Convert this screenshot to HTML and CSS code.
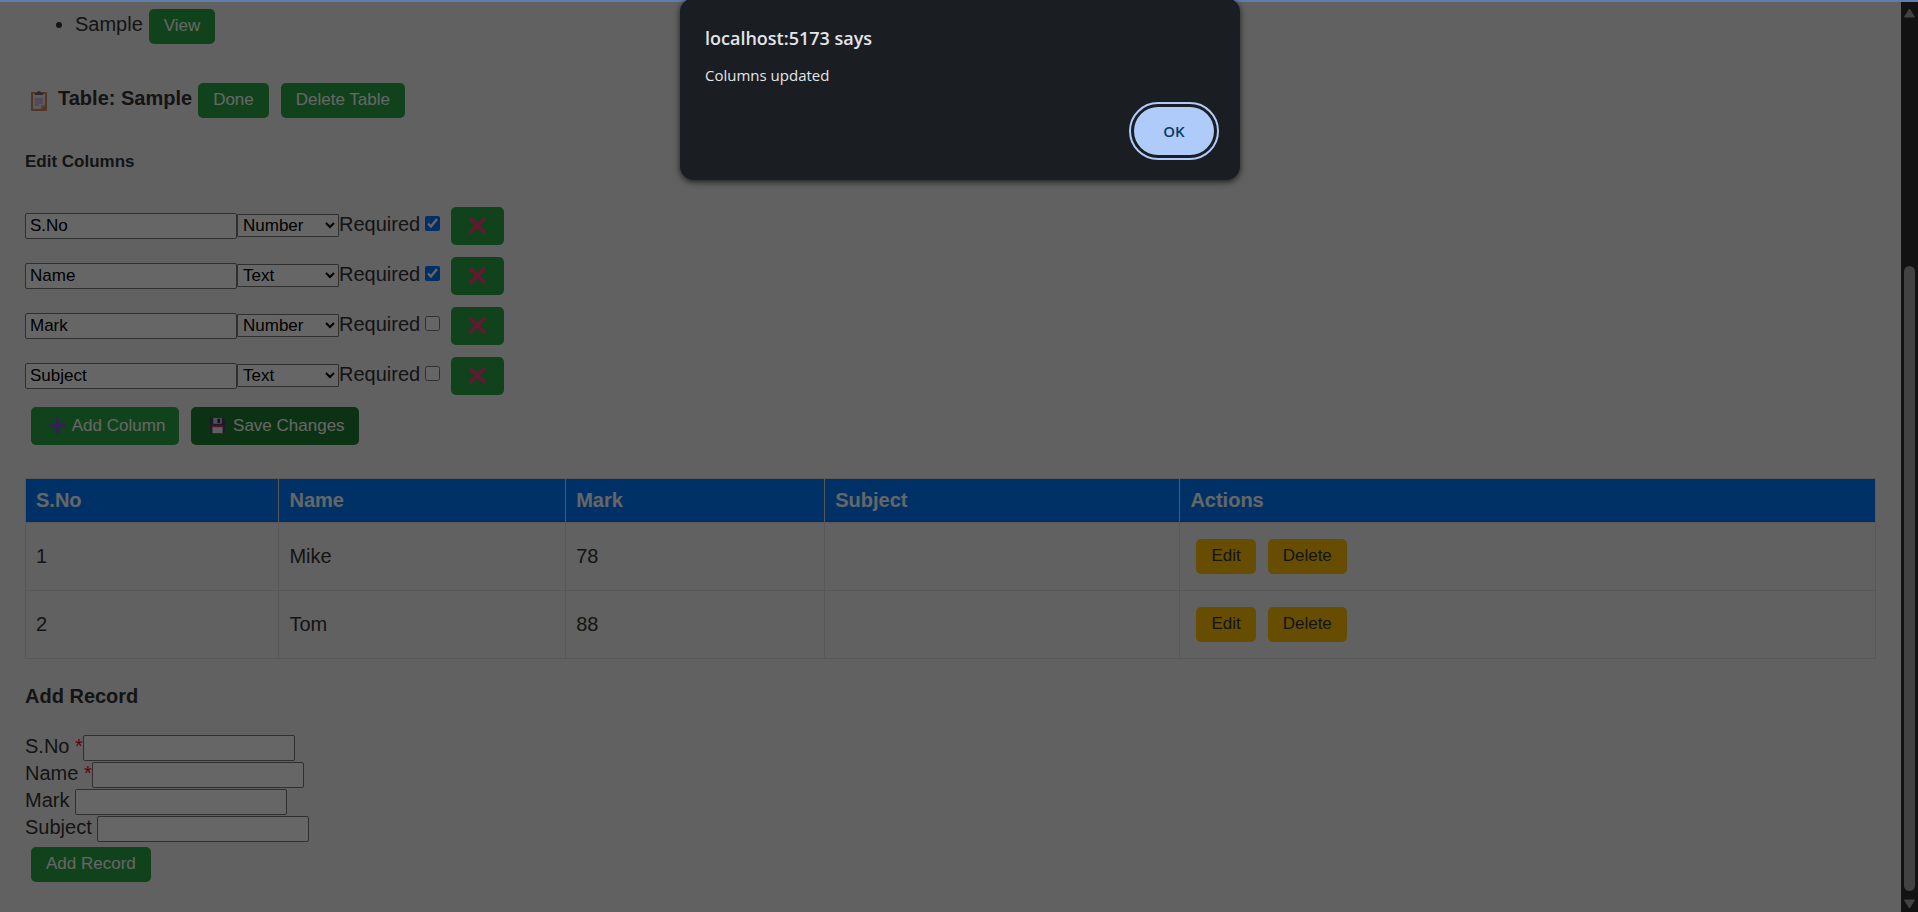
FILE: index.html
```
<!DOCTYPE html>
<html lang="en">
<head>
<meta charset="utf-8">
<title>Table Builder</title>
<link rel="stylesheet" href="styles.css">
</head>
<body>
<svg class="defs" aria-hidden="true">
  <symbol id="i-clip" viewBox="0 0 20 20">
    <rect x="2" y="1" width="16" height="19" rx="1" fill="#d08552"/>
    <path d="M4 3h12v11l-4 4H4z" fill="#e9e4f2"/>
    <path d="M16 14l-4 4v-4z" fill="#b9aed0"/>
    <path d="M6 4V2h2a2 2 0 0 1 4 0h2v2z" fill="#6d6877"/>
    <path d="M6 8h8M6 10h8M6 12h8M6 14h4" stroke="#a49bbb" stroke-width="1"/>
  </symbol>
  <symbol id="i-cross" viewBox="0 0 20 20">
    <path d="M2 2l16 16M18 2L2 18" stroke="#f0437a" stroke-width="4" stroke-linecap="round"/>
  </symbol>
  <symbol id="i-plus" viewBox="0 0 20 20">
    <path d="M10 2v16M2 10h16" stroke="#7a55c7" stroke-width="4" stroke-linecap="round"/>
  </symbol>
  <symbol id="i-disk" viewBox="0 0 20 20">
    <path d="M1 1h16l2 2v16H1z" fill="#4b4468"/>
    <rect x="5" y="1" width="10" height="7" fill="#c9c3d6"/>
    <rect x="10" y="2" width="3" height="5" fill="#302b45"/>
    <rect x="4" y="11" width="12" height="8" fill="#efeaf6"/>
    <rect x="4" y="10" width="12" height="2" fill="#f0305a"/>
  </symbol>
</svg>
<div class="topline"></div>
<div class="page">
  <main class="content">
    <ul class="tables"><li><div class="line">Sample<button class="btn">View</button></div></li></ul>

    <h3 class="line table-title"><svg class="icon icon-lg"><use href="#i-clip"/></svg>Table: Sample<button class="btn">Done</button><button class="btn">Delete Table</button></h3>

    <h5 class="subtitle">Edit Columns</h5>
    <div class="line column-row">
      <input class="field" type="text" value="S.No" aria-label="Column name">
      <select class="kind" aria-label="Column type"><option selected>Number</option><option>Text</option></select>
      <label class="req">Required<input type="checkbox" checked></label>
      <button class="btn tall" aria-label="Remove column"><svg class="icon"><use href="#i-cross"/></svg></button>
    </div>
    <div class="line column-row">
      <input class="field" type="text" value="Name" aria-label="Column name">
      <select class="kind" aria-label="Column type"><option>Number</option><option selected>Text</option></select>
      <label class="req">Required<input type="checkbox" checked></label>
      <button class="btn tall" aria-label="Remove column"><svg class="icon"><use href="#i-cross"/></svg></button>
    </div>
    <div class="line column-row">
      <input class="field" type="text" value="Mark" aria-label="Column name">
      <select class="kind" aria-label="Column type"><option selected>Number</option><option>Text</option></select>
      <label class="req">Required<input type="checkbox"></label>
      <button class="btn tall" aria-label="Remove column"><svg class="icon"><use href="#i-cross"/></svg></button>
    </div>
    <div class="line column-row">
      <input class="field" type="text" value="Subject" aria-label="Column name">
      <select class="kind" aria-label="Column type"><option>Number</option><option selected>Text</option></select>
      <label class="req">Required<input type="checkbox"></label>
      <button class="btn tall" aria-label="Remove column"><svg class="icon"><use href="#i-cross"/></svg></button>
    </div>
    <div class="line">
      <button class="btn tall labelled"><svg class="icon"><use href="#i-plus"/></svg> Add Column</button>
      <button class="btn tall labelled active"><svg class="icon"><use href="#i-disk"/></svg> Save Changes</button>
    </div>

    <table class="records">
      <colgroup><col class="c-no"><col class="c-name"><col class="c-mark"><col class="c-subject"><col></colgroup>
      <thead><tr><th>S.No</th><th>Name</th><th>Mark</th><th>Subject</th><th>Actions</th></tr></thead>
      <tbody>
        <tr><td>1</td><td>Mike</td><td>78</td><td></td><td><div class="line"><button class="btn warn">Edit</button><button class="btn warn">Delete</button></div></td></tr>
        <tr><td>2</td><td>Tom</td><td>88</td><td></td><td><div class="line"><button class="btn warn">Edit</button><button class="btn warn">Delete</button></div></td></tr>
      </tbody>
    </table>

    <h4 class="form-title">Add Record</h4>
    <form class="record-form">
      <div class="line"><label for="f1">S.No <span class="star">*</span></label><input class="field" id="f1" type="text"></div>
      <div class="line"><label for="f2">Name <span class="star">*</span></label><input class="field" id="f2" type="text"></div>
      <div class="line"><label for="f3">Mark&nbsp;</label><input class="field" id="f3" type="text"></div>
      <div class="line"><label for="f4">Subject&nbsp;</label><input class="field" id="f4" type="text"></div>
      <button class="btn submit" type="button">Add Record</button>
    </form>
  </main>
  <div class="scrollbar" aria-hidden="true">
    <svg class="arrow" viewBox="0 0 12 10"><path d="M6 1l5 8H1z"/></svg>
    <div class="track"><div class="thumb"></div></div>
    <svg class="arrow" viewBox="0 0 12 10"><path d="M6 9l5-8H1z"/></svg>
  </div>
  <div class="backdrop">
    <div class="dialog" role="alertdialog" aria-labelledby="dt" aria-describedby="dm">
      <h2 class="dialog-title" id="dt">localhost:5173 says</h2>
      <p class="dialog-text" id="dm">Columns updated</p>
      <div class="dialog-actions"><button class="ok">OK</button></div>
    </div>
  </div>
</div>
</body>
</html>
```
FILE: styles.css
```
* { box-sizing: border-box; }
body {
  margin: 0;
  min-height: 100vh;
  display: flex;
  flex-direction: column;
  font: 20px/23px "Liberation Sans", Arial, sans-serif;
  color: #333;
  background: #f2f2f2;
}
.defs { position: absolute; width: 0; height: 0; }
.topline { height: 2px; background: #607dac; }
.page { position: relative; flex: 1; display: flex; }
.content { flex: 1; padding: 1px 25px 20px; }
.line { display: flex; align-items: baseline; }

.btn {
  height: 35px;
  margin: 6px;
  padding: 0 15px 2px;
  border: 0;
  border-radius: 5px;
  background: #28a745;
  color: #fff;
  font: 17px/20px "Liberation Sans", Arial, sans-serif;
}
.tall { height: 38px; padding: 0 14px; }
.active { background: #1e7e34; }
.warn { background: #ffc107; color: #333; }
.icon { width: 17px; height: 17px; margin: 0 4px; vertical-align: -3px; }
.labelled .icon { margin: 0 2px 0 4px; }
.icon-lg { width: 20px; height: 20px; margin: 0 9px 0 4px; align-self: center; }

.tables { margin: 0; padding-left: 50px; }
.table-title { margin: 27px 0 28px; font-size: 20px; }
.subtitle { margin: 0 0 29px; font-size: 17px; line-height: 20px; }

.column-row { height: 50px; }
.field {
  width: 212px;
  height: 26px;
  padding: 1px 4px;
  border: 1px solid #767676;
  border-radius: 2px;
  background: #fff;
  color: #000;
  font: 17px/20px "Liberation Sans", Arial, sans-serif;
}
.kind {
  width: 102px;
  height: 23px;
  padding: 0 0 0 1px;
  border: 1px solid #767676;
  border-radius: 1px;
  background: #fff;
  color: #000;
  font: 17px/20px "Liberation Sans", Arial, sans-serif;
}
.req input { width: 15px; height: 15px; margin: 0 5px; accent-color: #0075ff; }

.records { width: 100%; margin: 27px 0 26px; border-collapse: collapse; table-layout: fixed; }
.records th, .records td { padding: 10px; border: 1px solid #ddd; text-align: left; }
.records th { background: #007bff; color: #fff; }
.c-no { width: 13.7%; }
.c-name { width: 15.5%; }
.c-mark { width: 14%; }
.c-subject { width: 19.2%; }

.form-title { margin: 0 0 27px; font-size: 20px; }
.record-form .line { min-height: 27px; }
.submit { margin: 4px 6px; }
.star { color: #f00; }

.scrollbar {
  width: 17px;
  padding: 6px 0 3px;
  display: flex;
  flex-direction: column;
  align-items: center;
  background: #2d2d2d;
}
.arrow { width: 13px; height: 10px; fill: #a5a5a5; stroke: #a5a5a5; stroke-linejoin: round; }
.track { flex: 1; display: flex; align-items: flex-end; padding-bottom: 8px; }
.thumb { width: 11px; height: 71.6%; border-radius: 6px; background: #a5a5a5; }

.backdrop {
  position: absolute;
  inset: 0;
  padding-left: 2px;
  display: flex;
  justify-content: center;
  align-items: flex-start;
  background: rgba(0, 0, 0, .6);
}
.dialog {
  width: 560px;
  margin-top: -4px;
  padding: 28px 25px 25px;
  border-radius: 14px;
  background: #1a1d21;
  color: #e3e5ea;
  font-family: "Open Sans", "Noto Sans", sans-serif;
  box-shadow: 0 2px 6px rgba(0, 0, 0, .7);
}
.dialog-title { margin: 0 0 14px; font-size: 18px; line-height: 24px; font-weight: 600; }
.dialog-text { margin: 0 0 21px; font-size: 15px; line-height: 22px; }
.dialog-actions { display: flex; justify-content: flex-end; padding-right: 1px; }
.ok {
  width: 80px;
  height: 48px;
  border: 0;
  border-radius: 24px;
  background: #aecbfa;
  color: #0b3a62;
  font: 600 15px/20px "Open Sans", "Noto Sans", sans-serif;
  outline: 2px solid #aecbfa;
  outline-offset: 3px;
}
```
